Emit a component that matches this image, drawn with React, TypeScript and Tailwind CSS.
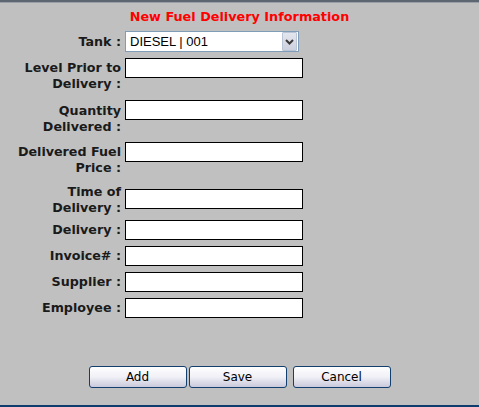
import React from "react";

const labelFont = { fontFamily: '"DejaVu Sans", Verdana, sans-serif' };

function Label({ lines }: { lines: string[] }) {
  return (
    <div className="w-[121px] shrink-0 text-right font-bold text-[12.7px] leading-[16px] text-[#1a1a1a]" style={labelFont}>
      {lines.map((l, i) => (
        <div key={i} className="whitespace-nowrap">{l}</div>
      ))}
    </div>
  );
}

function Field({ className = "" }: { className?: string }) {
  return <div className={`ml-[4px] h-[20px] w-[178px] shrink-0 border border-black bg-white ${className}`} />;
}

function Btn({ children, className = "" }: { children: React.ReactNode; className?: string }) {
  return (
    <div
      className={`flex h-[22px] w-[98px] items-center justify-center rounded-[3px] border border-[#123f6e] bg-gradient-to-b from-white via-[#f0f0f6] to-[#c9c9dc] text-[12px] text-black ${className}`}
      style={labelFont}
    >
      {children}
    </div>
  );
}

export default function App() {
  return (
    <div className="flex h-[407px] w-[479px] flex-col bg-[#c0c0c0]">
      <div className="h-[2px] bg-[#5d6670]" />
      <div className="h-[1px] bg-[#9aa0a8]" />
      <div className="mt-[6px] h-[16px] text-center text-[12.8px] font-bold leading-[16px] text-[#ff0000]" style={labelFont}>
        New Fuel Delivery Information
      </div>

      {/* Tank */}
      <div className="mt-[6px] flex h-[21px] items-center">
        <Label lines={["Tank :"]} />
        <div className="ml-[4px] flex h-[21px] w-[174px] items-center border border-[#7f9db9] bg-white">
          <span className="flex-1 pl-[4px] text-[13px] leading-none text-black" style={{ fontFamily: '"Liberation Sans", Arial, sans-serif' }}>
            DIESEL | 001
          </span>
          <div className="mr-[1px] flex h-[19px] w-[15px] items-center justify-center rounded-[1px] border border-[#b9c4d6] bg-gradient-to-b from-[#e4e6ee] to-[#cdd0de]">
            <svg width="9" height="6" viewBox="0 0 9 6">
              <path d="M1 1 L4.5 4.5 L8 1" fill="none" stroke="#3a3a3a" strokeWidth="2" />
            </svg>
          </div>
        </div>
      </div>

      {/* Level Prior to Delivery */}
      <div className="mt-[6px] flex h-[42px] items-start">
        <div className="mt-[2px]">
          <Label lines={["Level Prior to", "Delivery :"]} />
        </div>
        <Field />
      </div>

      {/* Quantity Delivered */}
      <div className="flex h-[42px] items-start">
        <div className="mt-[3px]">
          <Label lines={["Quantity", "Delivered :"]} />
        </div>
        <Field />
      </div>

      {/* Delivered Fuel Price */}
      <div className="flex h-[42px] items-start">
        <div className="mt-[2px]">
          <Label lines={["Delivered Fuel", "Price :"]} />
        </div>
        <Field />
      </div>

      {/* Time of Delivery */}
      <div className="flex h-[32px] items-start">
        <Label lines={["Time of", "Delivery :"]} />
        <Field className="mt-[5px]" />
      </div>

      <div className="mt-[4px] flex h-[20px] items-center">
        <Label lines={["Delivery :"]} />
        <Field />
      </div>
      <div className="mt-[6px] flex h-[20px] items-center">
        <Label lines={["Invoice# :"]} />
        <Field />
      </div>
      <div className="mt-[6px] flex h-[20px] items-center">
        <Label lines={["Supplier :"]} />
        <Field />
      </div>
      <div className="mt-[6px] flex h-[20px] items-center">
        <Label lines={["Employee :"]} />
        <Field />
      </div>

      <div className="mt-[48px] flex justify-center">
        <Btn>Add</Btn>
        <Btn className="ml-[2px]">Save</Btn>
        <Btn className="ml-[6px]">Cancel</Btn>
      </div>

      <div className="flex-1" />
      <div className="h-[2px] bg-[#0e3c6c]" />
    </div>
  );
}
